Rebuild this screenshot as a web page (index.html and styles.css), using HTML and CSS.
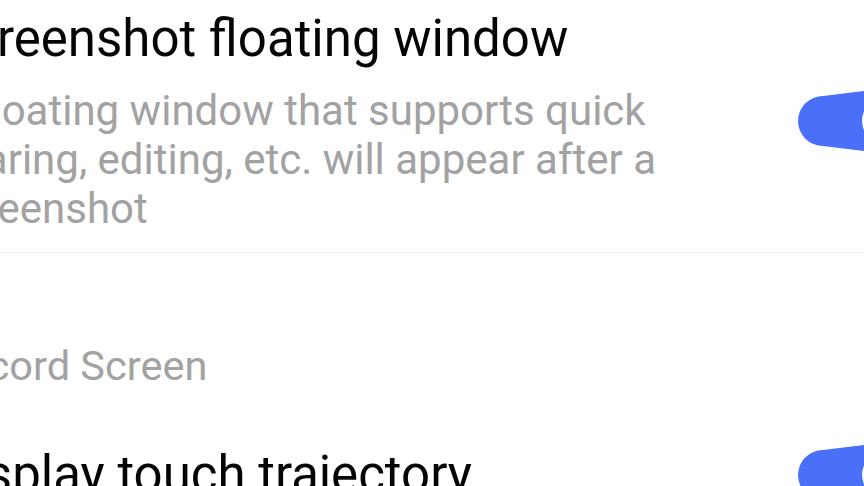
FILE: index.html
```html
<!DOCTYPE html>
<html>
<head>
<meta charset="utf-8">
<link rel="stylesheet" href="styles.css">
</head>
<body>
<div class="page">
  <div class="item">
    <div class="texts">
      <div class="title">Screenshot floating window</div>
      <div class="desc">A floating window that supports quick sharing, editing, etc. will appear after a screenshot</div>
    </div>
    <div class="toggle">
      <svg width="66" height="60" viewBox="0 0 66 60"><path d="M25 5 L66 0 L66 60 L25 55 A25 25 0 0 1 25 5 Z" fill="#4a6ff8"/><circle cx="86" cy="30" r="22" fill="#fff"/></svg>
    </div>
  </div>
  <div class="divider"></div>
  <div class="section">Record Screen</div>
  <div class="item item2">
    <div class="texts">
      <div class="title">Display touch trajectory</div>
    </div>
    <div class="toggle toggle2">
      <svg width="66" height="60" viewBox="0 0 66 60"><path d="M25 5 L66 0 L66 60 L25 55 A25 25 0 0 1 25 5 Z" fill="#4a6ff8"/><circle cx="86" cy="30" r="22" fill="#fff"/></svg>
    </div>
  </div>
</div>
</body>
</html>
```
FILE: styles.css
```css
html, body { margin: 0; padding: 0; background: #fff; overflow: hidden; }
body { width: 864px; height: 486px; font-family: Roboto, "Noto Sans", sans-serif; }
.page { margin-left: -60px; width: 924px; }
.item { display: flex; align-items: center; justify-content: space-between; padding: 9px 0 19px; }
.texts { width: 740px; }
.title { font-size: 51px; line-height: 60px; color: #050505; white-space: nowrap; }
.desc { font-size: 42px; line-height: 49px; color: #a2a2a2; margin-top: 17px; }
.toggle { flex: none; width: 66px; }
.toggle svg { display: block; }
.toggle2 { margin-top: 0; }
.divider { height: 1px; background: #f0f0f0; }
.section { font-size: 41.5px; line-height: 50px; color: #a2a2a2; margin-top: 88px; }
.item2 { padding: 54px 0 0; }
```
